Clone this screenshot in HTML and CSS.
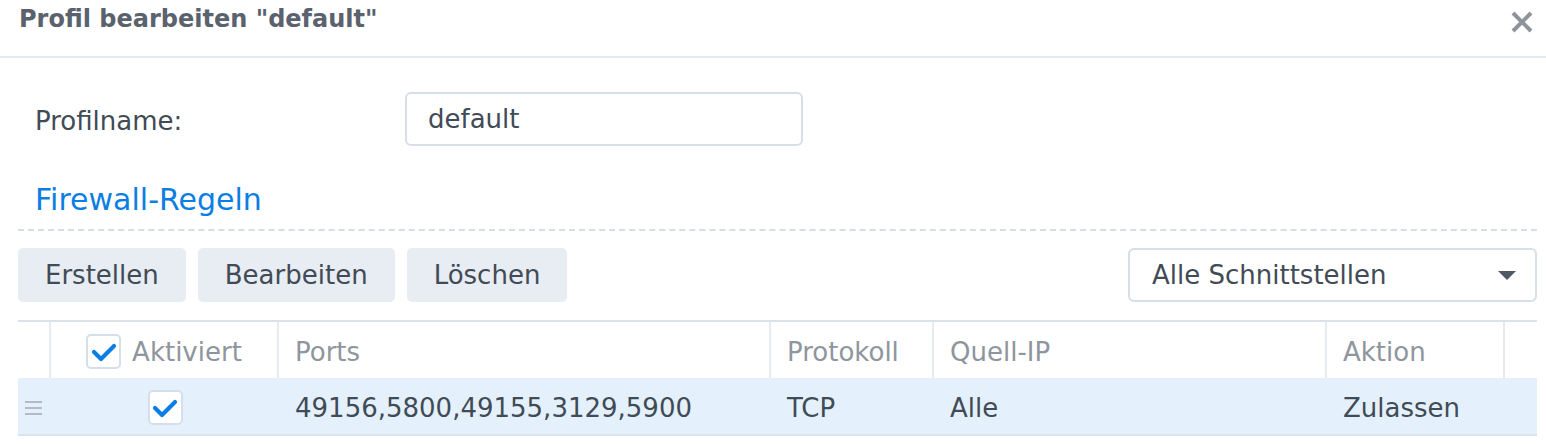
FILE: index.html
```html
<!DOCTYPE html>
<html lang="de">
<head>
<meta charset="utf-8">
<title>Profil bearbeiten</title>
<link rel="stylesheet" href="styles.css">
</head>
<body>
<div class="dialog">
  <div class="header">
    <div class="title">Profil bearbeiten "default"</div>
    <svg class="close" width="22" height="22" viewBox="0 0 22 22"><path d="M2 2 L20 20 M20 2 L2 20" stroke="#8e949b" stroke-width="4" fill="none"/></svg>
  </div>
  <div class="content">
    <div class="form-row">
      <div class="label">Profilname:</div>
      <div class="input">default</div>
    </div>
    <div class="section">Firewall-Regeln</div>
    <div class="toolbar">
      <div class="btn">Erstellen</div>
      <div class="btn">Bearbeiten</div>
      <div class="btn">Löschen</div>
      <div class="spacer"></div>
      <div class="select">
        <span>Alle Schnittstellen</span>
        <span class="arrow"></span>
      </div>
    </div>
    <div class="grid">
      <div class="grow head">
        <div class="cell"></div>
        <div class="cell center"><span class="cb"><svg width="26" height="20" viewBox="0 0 26 20"><path d="M3 10 L10 17 L23 4" stroke="#0b7ee4" stroke-width="4.2" fill="none" stroke-linecap="round" stroke-linejoin="round"/></svg></span><span class="cbl">Aktiviert</span></div>
        <div class="cell">Ports</div>
        <div class="cell">Protokoll</div>
        <div class="cell">Quell-IP</div>
        <div class="cell">Aktion</div>
        <div class="cell last"></div>
      </div>
      <div class="grow data">
        <div class="cell handle"><span></span><span></span><span></span></div>
        <div class="cell center"><span class="cb"><svg width="26" height="20" viewBox="0 0 26 20"><path d="M3 10 L10 17 L23 4" stroke="#0b7ee4" stroke-width="4.2" fill="none" stroke-linecap="round" stroke-linejoin="round"/></svg></span></div>
        <div class="cell">49156,5800,49155,3129,5900</div>
        <div class="cell">TCP</div>
        <div class="cell">Alle</div>
        <div class="cell">Zulassen</div>
        <div class="cell last"></div>
      </div>
    </div>
  </div>
</div>
</body>
</html>
```

FILE: styles.css
```css
* { box-sizing: border-box; }
html, body { margin: 0; padding: 0; background: #fff; }
body {
  width: 1546px;
  height: 444px;
  overflow: hidden;
  font-family: "DejaVu Sans", Verdana, sans-serif;
  color: #414b55;
}
.header {
  height: 58px;
  border-bottom: 2px solid #e4e9f0;
  display: flex;
  align-items: flex-start;
  justify-content: space-between;
  padding: 3px 13px 0 19px;
}
.title {
  font-size: 24px;
  font-weight: bold;
  color: #5a626d;
  line-height: 32px;
}
.close { margin-top: 8px; }
.content {
  padding: 0 9px 0 18px;
}
.form-row {
  display: flex;
  align-items: center;
  margin-top: 34px;
  padding-left: 17px;
}
.label {
  width: 370px;
  font-size: 26px;
  padding-top: 3px;
}
.input {
  width: 398px;
  height: 54px;
  border: 2px solid #d6dee7;
  border-radius: 6px;
  padding-left: 21px;
  display: flex;
  align-items: center;
  font-size: 26px;
}
.section {
  margin-top: 34px;
  padding-left: 17px;
  color: #0b7ee4;
  font-size: 30px;
  line-height: 40px;
  height: 51px;
  border-bottom: 2px dashed #d4dee8;
}
.toolbar {
  display: flex;
  gap: 12px;
  margin-top: 17px;
  height: 54px;
}
.btn {
  background: #e8edf4;
  border-radius: 5px;
  font-size: 26px;
  display: flex;
  align-items: center;
  padding: 0 27px;
}
.spacer { flex: 1; }
.select {
  width: 409px;
  border: 2px solid #d6dee7;
  border-radius: 6px;
  display: flex;
  align-items: center;
  justify-content: space-between;
  padding: 0 19px 0 22px;
  font-size: 26px;
}
.arrow {
  width: 0;
  height: 0;
  border-left: 9px solid transparent;
  border-right: 9px solid transparent;
  border-top: 9px solid #4f5965;
}
.grid {
  margin-top: 18px;
  border-top: 2px solid #dbe2ea;
}
.grow {
  display: grid;
  grid-template-columns: 33px 228px 492px 163px 393px 178px 32px;
}
.head { color: #8e959d; font-size: 26px; height: 56px; }
.head .cell { border-right: 2px solid #e6ebf0; }
.head .cell.last { border-right: none; }
.data {
  height: 58px;
  background: #e4f1fd;
  border-bottom: 2px solid #d9e3ec;
  font-size: 26px;
}
.cell {
  display: flex;
  align-items: center;
  padding-left: 16px;
  padding-top: 3px;
  white-space: nowrap;
}
.cell.center { justify-content: center; padding-left: 0; gap: 11px; }
.cb {
  width: 35px;
  height: 35px;
  border: 2px solid #d5dfe9;
  border-radius: 5px;
  background: #fff;
  display: flex;
  align-items: center;
  justify-content: center;
}
.handle {
  flex-direction: column;
  justify-content: center;
  align-items: flex-start;
  padding-left: 7px;
  gap: 4px;
}
.handle span {
  display: block;
  width: 17px;
  height: 2px;
  background: #b3bcc6;
}
```
